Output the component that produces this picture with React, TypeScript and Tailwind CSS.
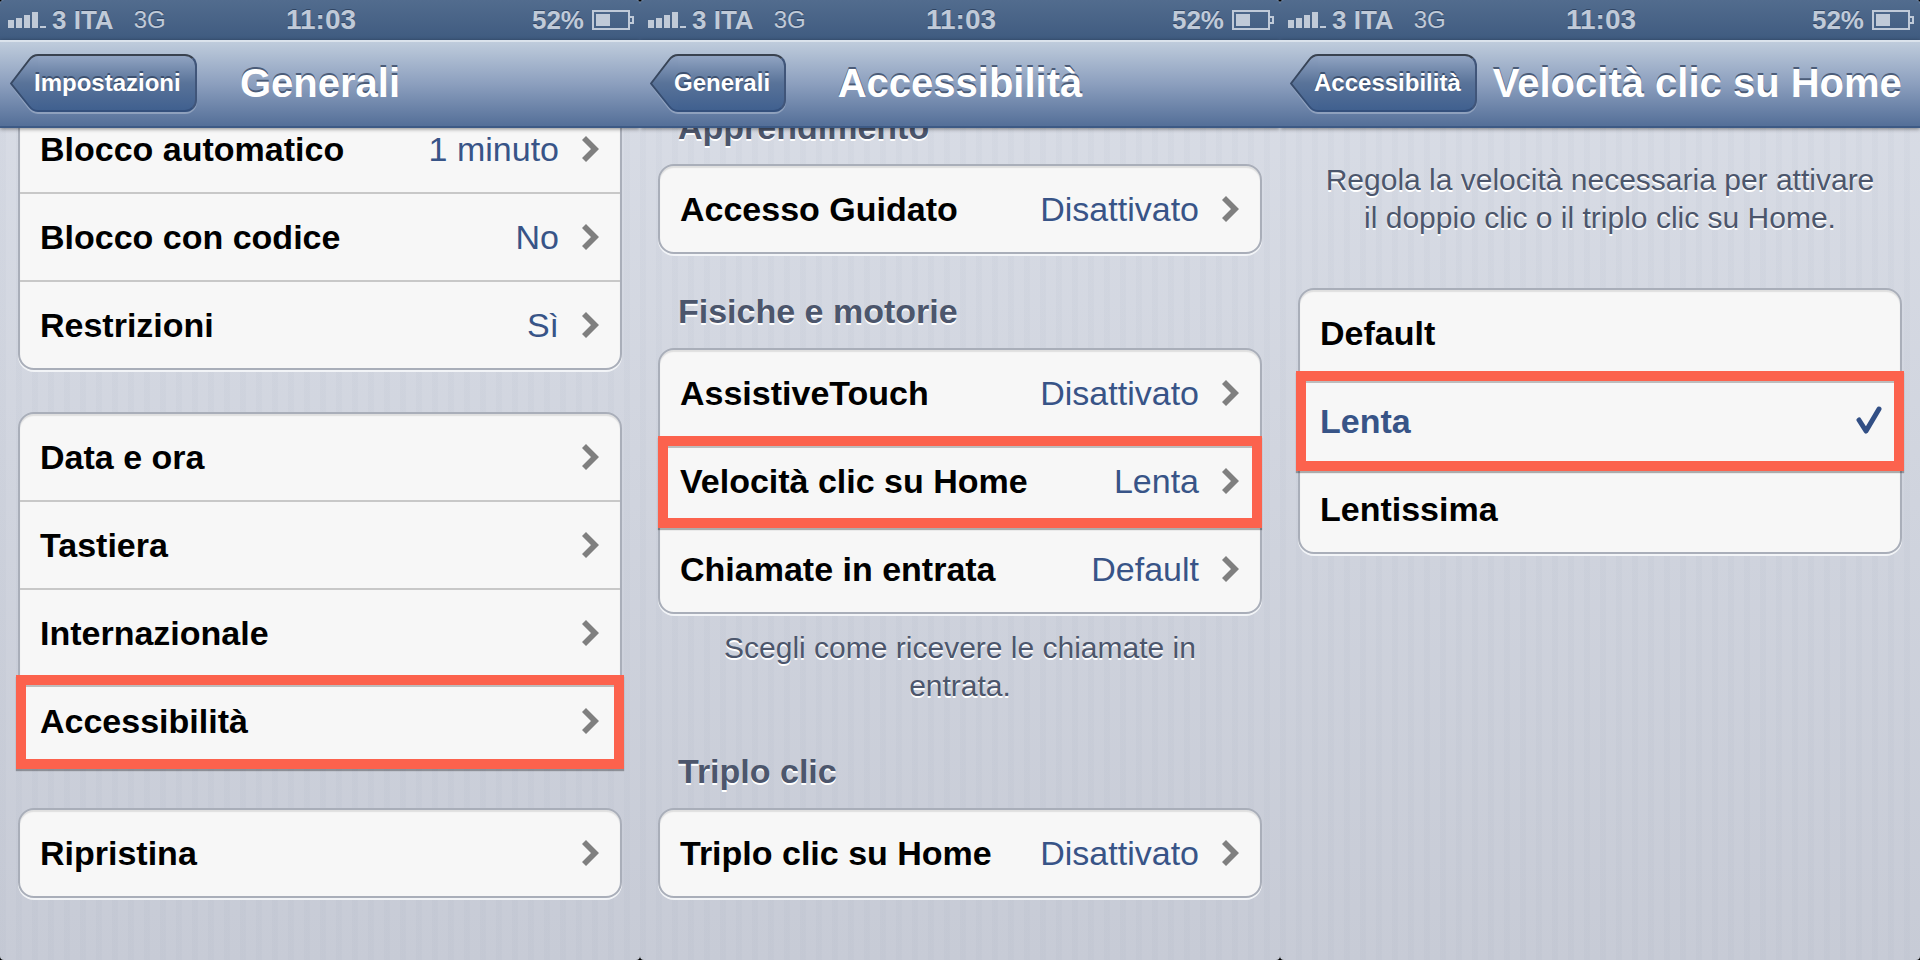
import { useId } from "react"
import clsx from "clsx"

interface IRow {
  label: string
  value?: string
  highlight?: string
}

interface IScreen {
  back: string
  title: string
  children: React.ReactNode
}

const StatusBar = () => {
  return (
    <div className="grid h-10 grid-cols-3 items-center bg-linear-to-b from-[#526c8e] to-[#3f5b80] pr-1.5 pl-2 text-[26px] leading-8 font-bold text-[#c0cad8] [text-shadow:0_-1px_0_#2f4462]">
      <div className="flex items-center">
        <svg width="38" height="16" viewBox="0 0 38 16" fill="currentColor" aria-hidden="true">
          <rect x="0" y="8" width="6" height="8" />
          <rect x="8" y="6" width="6" height="10" />
          <rect x="16" y="3" width="6" height="13" />
          <rect x="24" y="0" width="6" height="16" />
          <rect x="32" y="14" width="6" height="2" />
        </svg>
        <span className="pl-1.5">3 ITA</span>
        <span className="pl-5 text-2xl font-normal">3G</span>
      </div>
      <span className="text-center text-[28px]">11:03</span>
      <div className="flex items-center justify-end gap-2">
        <span>52%</span>
        <svg width="42" height="20" viewBox="0 0 42 20" fill="none" aria-hidden="true">
          <rect x="1" y="1" width="36" height="18" stroke="currentColor" strokeWidth="2" />
          <rect x="4" y="4" width="14" height="12" fill="currentColor" />
          <path d="M38 7h3v6h-3" stroke="currentColor" strokeWidth="2" />
        </svg>
      </div>
    </div>
  )
}

const BackButton = ({ label }: { label: string }) => {
  const id = useId()

  return (
    <button className="relative block h-[58px] pr-4 pl-6 text-2xl font-bold text-white [text-shadow:0_-2px_0_#3d5170]">
      <span className="absolute inset-y-0 right-0 left-7 rounded-r-xl border-2 border-l-0 border-t-[#39424f] border-r-[#405579] border-b-[#34507c] bg-linear-to-b from-[#91a4c2] via-[#597399] to-[#40608f] shadow-[0_2px_0_#8fa1bd]" />
      <svg className="absolute top-0 left-0" width="28" height="60" viewBox="0 0 28 60" fill="none" aria-hidden="true">
        <defs>
          <linearGradient id={id + "fill"} x1="0" y1="0" x2="0" y2="1">
            <stop offset="0" stopColor="#91a4c2" />
            <stop offset="0.5" stopColor="#597399" />
            <stop offset="1" stopColor="#40608f" />
          </linearGradient>
          <linearGradient id={id + "edge"} x1="0" y1="0" x2="0" y2="1">
            <stop offset="0" stopColor="#39424f" />
            <stop offset="1" stopColor="#34507c" />
          </linearGradient>
        </defs>
        <path d="M28 59c-4 0-6-1-9-5L2 32" stroke="#8fa1bd" strokeWidth="2" />
        <path
          d="M28 1c-4 0-6 1-9 5L1 29.5L19 52c3 4 5 5 9 5"
          fill={`url(#${id}fill)`}
          stroke={`url(#${id}edge)`}
          strokeWidth="2"
        />
      </svg>
      <span className="relative">{label}</span>
    </button>
  )
}

const Screen = ({ back, title, children }: IScreen) => {
  return (
    <div className="bg-black">
      <main className="flex h-full min-h-screen flex-col overflow-hidden rounded-[4px] bg-linear-to-b from-[#dadee7] to-[#c7cbd6]">
        <StatusBar />
        <header className="relative z-10 grid h-[88px] grid-cols-[1fr_auto_1fr] items-center border-t-2 border-b-2 border-t-[#dbe3ec] border-b-[#3d5a85] bg-linear-to-b from-[#bfccdc] via-[#8c9fbe] to-[#546f98] px-2.5 pb-0.5 shadow-[0_1px_4px_rgba(0,0,0,0.45)]">
          <div className="pr-4">
            <BackButton label={back} />
          </div>
          <h1 className="text-[40px] leading-[48px] font-bold whitespace-nowrap text-white [text-shadow:0_-2px_0_#4b5c78]">
            {title}
          </h1>
        </header>
        <div className="grow overflow-hidden bg-[repeating-linear-gradient(90deg,rgba(110,125,150,0.035)_0_6px,transparent_6px_16px)] px-[18px]">
          {children}
        </div>
      </main>
    </div>
  )
}

const Chevron = () => {
  return (
    <svg className="ml-[23px]" width="18" height="26" viewBox="0 0 18 26" fill="#7f7f7f" aria-hidden="true">
      <path d="M4 0L17 13L4 26L0 22L9 13L0 4Z" />
    </svg>
  )
}

const Check = () => {
  return (
    <svg className="-mr-0.5" width="26" height="32" viewBox="0 0 26 32" fill="none" aria-hidden="true">
      <path d="M3 15L10 26L23 4" stroke="#324f85" strokeWidth="5" strokeLinecap="round" strokeLinejoin="round" />
    </svg>
  )
}

// Cornice rossa sopra la riga
const Frame = ({ className }: { className: string }) => {
  return (
    <span
      className={clsx(
        "pointer-events-none absolute z-10 border-10 border-[#fc624d] shadow-[0_2px_1px_rgba(0,0,0,0.3),inset_0_2px_0_#bdbdbd]",
        className
      )}
    />
  )
}

const cardStyle =
  "rounded-[16px] border-2 border-[#a9aeb9] bg-[#f7f7f7] shadow-[0_2px_0_#f2f4f7,inset_0_2px_1px_#dfdfdf]"

const rowStyle =
  "relative flex h-[88px] w-full items-center border-b-2 border-[#c8c8c8] px-5 text-left text-[34px] last:h-[86px] last:border-b-0"

const List = ({ rows }: { rows: IRow[] }) => {
  return (
    <div className={cardStyle}>
      {rows.map((row) => (
        <button key={row.label} className={rowStyle}>
          <span className="grow font-bold text-black">{row.label}</span>
          {row.value && <span className="text-[#385487]">{row.value}</span>}
          <Chevron />
          {row.highlight && <Frame className={row.highlight} />}
        </button>
      ))}
    </div>
  )
}

const Heading = ({ children }: { children: string }) => {
  return (
    <h2 className="px-5 pt-[38px] pb-[18px] text-[34px] leading-[38px] font-bold text-[#4c566c] [text-shadow:0_2px_0_#fff]">
      {children}
    </h2>
  )
}

const Note = ({ children }: { children: React.ReactNode }) => {
  return (
    <p className="px-5 text-center text-[30px] leading-[38px] text-[#4c566c] [text-shadow:0_2px_0_#fff]">
      {children}
    </p>
  )
}

const speeds = ["Default", "Lenta", "Lentissima"]

const App = () => {
  return (
    <div className="grid min-h-screen grid-cols-3 font-['Liberation_Sans',Arial,sans-serif]">
      <Screen back="Impostazioni" title="Generali">
        <div className="-mt-6 flex flex-col gap-[42px]">
          <List
            rows={[
              { label: "Blocco automatico", value: "1 minuto" },
              { label: "Blocco con codice", value: "No" },
              { label: "Restrizioni", value: "Sì" },
            ]}
          />
          <List
            rows={[
              { label: "Data e ora" },
              { label: "Tastiera" },
              { label: "Internazionale" },
              { label: "Accessibilità", highlight: "-inset-x-1 -top-[3px] -bottom-[5px]" },
            ]}
          />
          <List rows={[{ label: "Ripristina" }]} />
        </div>
      </Screen>

      <Screen back="Generali" title="Accessibilità">
        <div className="-mt-[58px]">
          <Heading>Apprendimento</Heading>
          <List rows={[{ label: "Accesso Guidato", value: "Disattivato" }]} />
          <Heading>Fisiche e motorie</Heading>
          <List
            rows={[
              { label: "AssistiveTouch", value: "Disattivato" },
              {
                label: "Velocità clic su Home",
                value: "Lenta",
                highlight: "-inset-x-0.5 -top-0.5 -bottom-1",
              },
              { label: "Chiamate in entrata", value: "Default" },
            ]}
          />
          <div className="px-5 pt-[15px] pb-[9px]">
            <Note>Scegli come ricevere le chiamate in entrata.</Note>
          </div>
          <Heading>Triplo clic</Heading>
          <List rows={[{ label: "Triplo clic su Home", value: "Disattivato" }]} />
        </div>
      </Screen>

      <Screen back="Accessibilità" title="Velocità clic su Home">
        <div className="pt-[33px] pb-[51px]">
          <Note>
            Regola la velocità necessaria per attivare il doppio clic o il triplo clic su Home.
          </Note>
        </div>
        <div className={cardStyle}>
          {speeds.map((speed) => {
            const selected = speed === "Lenta"
            return (
              <button key={speed} className={rowStyle}>
                <span className={clsx("grow font-bold", selected ? "text-[#385487]" : "text-black")}>
                  {speed}
                </span>
                {selected && <Check />}
                {selected && <Frame className="-inset-x-1 -top-[7px] -bottom-[7px]" />}
              </button>
            )
          })}
        </div>
      </Screen>
    </div>
  )
}

export default App
